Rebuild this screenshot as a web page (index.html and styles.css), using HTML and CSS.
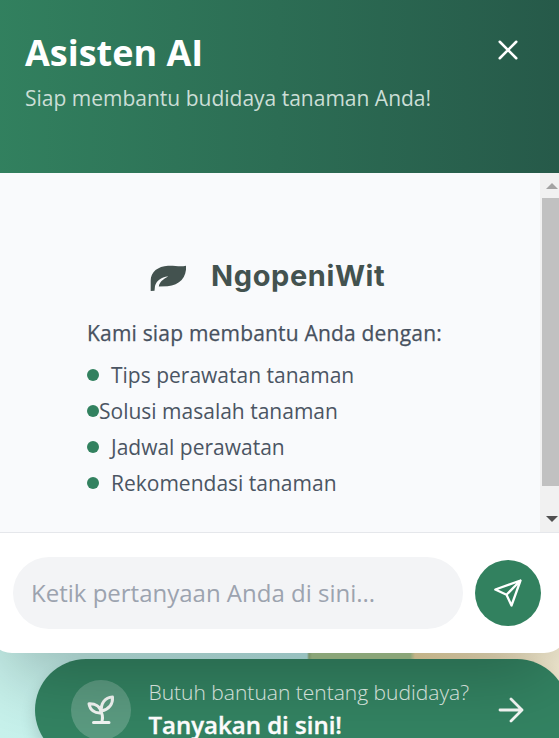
FILE: index.html
```html
<!DOCTYPE html>
<html lang="id">
<head>
<meta charset="utf-8">
<title>Asisten AI</title>
<link rel="stylesheet" href="styles.css">
</head>
<body>
<main class="page">
  <section class="chat">
    <header class="chat-header">
      <div>
        <h1 class="title">Asisten AI</h1>
        <p class="subtitle">Siap membantu budidaya tanaman Anda!</p>
      </div>
      <button class="close" aria-label="Tutup">
        <svg width="36" height="36" viewBox="0 0 24 24" fill="none" stroke="currentColor" stroke-width="1.700" stroke-linecap="round"><path d="M6.500 6.500l11 11M17.500 6.500L6.500 17.500"/></svg>
      </button>
    </header>
    <div class="messages">
      <div class="welcome">
        <div class="brand">
          <svg class="leaf" width="37" height="27" viewBox="0 0 37 27"><path fill="currentColor" d="M.7 26V15.500C.7 7 8 1.300 18 .8C25 .5 30 2.200 36 .8C37 12 29.500 20.500 17.500 21.200L8.800 21.500C9.500 17 13 14.500 18.300 11.300C10.500 12.500 6.500 16 5 21L4.500 25.700Z"/></svg>
          <span class="brand-name">NgopeniWit</span>
        </div>
        <p class="lead">Kami siap membantu Anda dengan:</p>
        <ul class="topics">
          <li><i class="dot"></i><span>Tips perawatan tanaman</span></li>
          <li class="tight"><i class="dot"></i><span>Solusi masalah tanaman</span></li>
          <li><i class="dot"></i><span>Jadwal perawatan</span></li>
          <li><i class="dot"></i><span>Rekomendasi tanaman</span></li>
        </ul>
      </div>
      <div class="scrollbar">
        <i class="arrow-up"></i>
        <i class="thumb"></i>
        <i class="arrow-down"></i>
      </div>
    </div>
    <footer class="composer">
      <div class="input">Ketik pertanyaan Anda di sini...</div>
      <button class="send" aria-label="Kirim">
        <svg width="28" height="28" viewBox="0 0 28 28" fill="none" stroke="#fff" stroke-width="2.300" stroke-linejoin="round" stroke-linecap="round"><path d="M26.500 1.500L1.300 10.500L12.500 15.800L17.500 26.500ZM12.500 15.800L26.500 1.500"/></svg>
      </button>
    </footer>
  </section>
  <a class="launcher">
    <span class="launcher-icon">
      <svg width="28" height="30" viewBox="0 0 28 30" fill="none" stroke="#f3f6f4" stroke-width="3" stroke-linecap="round" stroke-linejoin="round"><path d="M6.500 27.500H22M14.500 27.500C16 24 15.500 20 14.300 17M14.300 17C13.500 8 18 2.500 25.500 2C26 9 22 14.500 14.300 16M14 18C13.500 11 8 8.500 2 8.800C3 15 7.500 18.500 14 18"/></svg>
    </span>
    <span class="launcher-text">
      <span class="hint">Butuh bantuan tentang budidaya?</span>
      <strong>Tanyakan di sini!</strong>
    </span>
    <svg class="go" width="26" height="26" viewBox="0 0 26 26" fill="none" stroke="#f5f8f6" stroke-width="2.800" stroke-linecap="round" stroke-linejoin="round"><path d="M2 13H24M13 2L24 13L13 24"/></svg>
  </a>
</main>
</body>
</html>
```
FILE: styles.css
```css
* { box-sizing: border-box; margin: 0; padding: 0; }
body { font-family: "Open Sans", "Noto Sans", sans-serif; }
button { border: 0; background: none; color: #fff; }
.page {
  width: 559px;
  height: 738px;
  overflow: hidden;
  background: linear-gradient(90deg, #c8f2ec 0, #b9eae8 307px, #95b482 309px, #a9c993 312px 410px, #eddaa6 415px, #f4ecd3 559px);
}
.chat {
  position: relative;
  z-index: 1;
  width: 580px;
  margin-left: -12px;
  border-radius: 24px;
  background: #fff;
  box-shadow: 0 37px 75px -18px rgba(0, 0, 0, .25);
}
.chat-header {
  display: flex;
  justify-content: space-between;
  height: 173px;
  padding: 28px 42px 0 37px;
  background: linear-gradient(90deg, #32815f, #265949);
  color: #fff;
}
.title { font-size: 36px; line-height: 50px; font-weight: 700; }
.subtitle { margin-top: 5px; font-size: 21px; line-height: 30px; color: #cbded6; white-space: nowrap; }
.close { width: 36px; height: 36px; margin-top: 4px; }
.close svg { display: block; }
.messages {
  display: flex;
  justify-content: space-between;
  height: 360px;
  padding-left: 12px;
  border-bottom: 1px solid #e5e7eb;
  background: #f9fafc;
}
.welcome { padding: 84px 0 0 87px; }
.brand { display: flex; align-items: center; height: 38px; padding-left: 63px; color: #43524f; }
.leaf { margin-top: 4px; }
.brand-name { margin-left: 24px; font: 700 29px/38px Inter, sans-serif; letter-spacing: .6px; }
.lead {
  margin-top: 23px;
  font-size: 21px;
  line-height: 30px;
  letter-spacing: .19px;
  -webkit-text-stroke: .25px currentColor;
  color: #47515f;
  white-space: nowrap;
}
.topics { margin-top: 9px; list-style: none; font-size: 21px; color: #4b5563; }
.topics li { display: flex; align-items: center; height: 36px; gap: 12px; white-space: nowrap; }
.topics .tight { gap: 0; }
.dot { width: 12px; height: 12px; border-radius: 50%; background: #32815f; }
.scrollbar {
  display: flex;
  flex-direction: column;
  align-items: flex-start;
  width: 28px;
  padding: 10px 0 10px 2px;
  background: #f1f1f1;
}
.arrow-up, .arrow-down { margin-left: 4px; border: 6px solid transparent; }
.arrow-up { border-top: 0; border-bottom-color: #a3a3a3; }
.arrow-down { margin-top: auto; border-bottom: 0; border-top-color: #505050; }
.thumb { width: 24px; height: 288px; margin-top: 9px; background: #c1c1c1; }
.composer { display: flex; align-items: center; gap: 12px; height: 120px; padding-left: 25px; }
.input {
  width: 450px;
  height: 72px;
  padding-left: 18px;
  border-radius: 36px;
  background: #f3f4f6;
  color: #9ca3af;
  font-size: 24px;
  line-height: 72px;
}
.send {
  display: grid;
  place-items: center;
  width: 66px;
  height: 66px;
  border-radius: 50%;
  background: #32815f;
}
.launcher {
  display: flex;
  align-items: center;
  width: 533px;
  height: 102px;
  margin: 6px 0 0 35px;
  padding: 0 44px 0 36px;
  border-radius: 51px;
  background: #338362;
  box-shadow: 0 8px 16px rgba(0, 0, 0, .14);
}
.launcher-icon {
  display: grid;
  place-items: center;
  width: 60px;
  height: 60px;
  border-radius: 50%;
  background: rgba(255, 255, 255, .2);
}
.launcher-text { display: flex; flex-direction: column; margin: -2px 0 0 17.5px; color: #fff; white-space: nowrap; }
.hint { font-size: 21px; line-height: 32px; font-weight: 300; color: #e2f0e9; }
.launcher strong { font-size: 24px; line-height: 34px; font-weight: 600; -webkit-text-stroke: .4px currentColor; }
.go { margin-left: auto; }
```
